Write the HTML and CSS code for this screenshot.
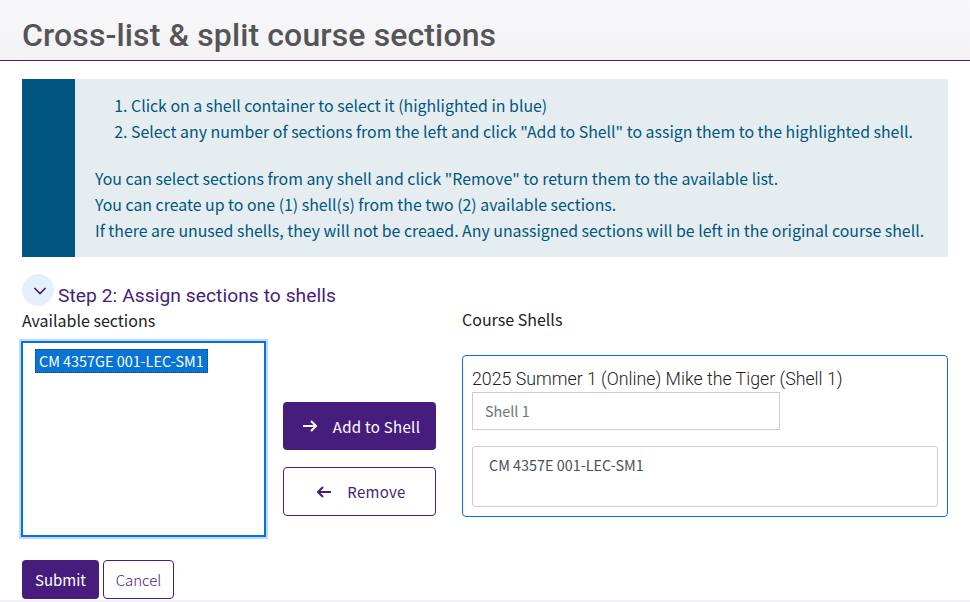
FILE: index.html
```html
<!DOCTYPE html>
<html lang="en">
<head>
<meta charset="utf-8">
<title>Cross-list &amp; split course sections</title>
<link rel="stylesheet" href="styles.css">
</head>
<body>
<header class="page-header"><h1>Cross-list &amp; split course sections</h1></header>
<main class="content">
  <section class="notice">
    <div class="notice-bar"></div>
    <div class="notice-body">
      <ol>
        <li>Click on a shell container to select it (highlighted in blue)</li>
        <li>Select any number of sections from the left and click "Add to Shell" to assign them to the highlighted shell.</li>
      </ol>
      <p>You can select sections from any shell and click "Remove" to return them to the available list.</p>
      <p>You can create up to one (1) shell(s) from the two (2) available sections.</p>
      <p>If there are unused shells, they will not be creaed. Any unassigned sections will be left in the original course shell.</p>
    </div>
  </section>
  <div class="step">
    <span class="chevron"><svg class="chevron-icon" width="14" height="14" viewBox="0 0 14 14"><path d="M1.500 4 7 9.500 12.500 4" fill="none" stroke="#461d7c" stroke-width="1.700"/></svg></span>
    <h2>Step 2: Assign sections to shells</h2>
  </div>
  <div class="assign">
    <div class="available">
      <div class="label">Available sections</div>
      <div class="listbox"><span class="option">CM 4357GE 001-LEC-SM1</span></div>
    </div>
    <div class="actions">
      <button class="btn primary"><svg class="arrow" width="14" height="12" viewBox="0 0 14 12"><path d="M0 6h13M8 1l5 5-5 5" fill="none" stroke="currentColor" stroke-width="2"/></svg>Add to Shell</button>
      <button class="btn outline"><svg class="arrow" width="14" height="12" viewBox="0 0 14 12"><path d="M14 6H1M6 1 1 6l5 5" fill="none" stroke="currentColor" stroke-width="2"/></svg>Remove</button>
    </div>
    <div class="shells">
      <div class="label shells-label">Course Shells</div>
      <div class="shell">
        <div class="shell-title">2025 Summer 1 (Online) Mike the Tiger (Shell 1)</div>
        <div class="shell-input">Shell 1</div>
        <div class="shell-list">CM 4357E 001-LEC-SM1</div>
      </div>
    </div>
  </div>
  <div class="form-actions">
    <button class="submit">Submit</button>
    <button class="cancel">Cancel</button>
  </div>
</main>
<div class="page-foot"></div>
</body>
</html>
```
FILE: styles.css
```css
* { box-sizing: border-box; }
html, body { margin: 0; height: 602px; overflow: hidden; background: #fff; }
body { font-family: "Noto Sans CJK SC", "Liberation Sans", sans-serif; font-size: 16px; color: #222; position: relative; }
.page-header { height: 61px; padding: 16px 22px 0; background: linear-gradient(#f8f8fa, #f3f2f6); border-bottom: 1px solid #461d7c; }
h1 { margin: 0; font: 500 32px/38px Roboto, sans-serif; letter-spacing: .12px; color: #555; }
.content { padding: 18px 22px 0; }
.notice { display: flex; height: 178px; background: #e5edf0; color: #00567f; }
.notice-bar { flex: none; width: 53px; background: #00567f; }
.notice-body { padding: 14px 0 0 20px; font-size: 15.880px; line-height: 26px; }
.notice-body ol { margin: 0 0 21px; padding-left: 36px; }
.notice-body p { margin: 0; }
.step { display: flex; align-items: flex-end; height: 32px; margin-top: 17px; }
.chevron { display: flex; align-items: center; justify-content: center; width: 32px; height: 32px; border-radius: 50%; background: #e6f0fd; margin-right: 4px; }
.chevron-icon { margin: 2px 0 0 4px; }
h2 { margin: 0 0 -2px; font: 400 19.200px/24px Roboto, sans-serif; color: #461d7c; letter-spacing: .07px; }
.assign { display: flex; padding-top: 2px; }
.available { width: 245px; }
.label { font-size: 16px; line-height: 24px; color: #212121; }
.listbox { height: 196px; margin: 9px 1px 0 -1px; border: 2px solid #0a6fd8; outline: 2px solid #bcdcfb; padding: 5px 12px; }
.option { display: inline-block; height: 24px; padding: 0 4px; background: #0a74d4; color: #fff; font-size: 14.400px; line-height: 23px; outline: 1px dotted #04478a; outline-offset: -1px; }
.actions { width: 153px; margin-left: 16px; padding-top: 94px; display: flex; flex-direction: column; gap: 17px; }
.btn { display: flex; align-items: center; justify-content: center; width: 153px; height: 48px; padding: 0 0 0 4px; border-radius: 4px; font: 400 15px "Noto Sans CJK SC", sans-serif; letter-spacing: .3px; }
.arrow { margin-right: 16px; }
.primary { background: #461d7c; color: #fff; border: 0; }
.outline { background: #fff; color: #461d7c; border: 1px solid #461d7c; height: 49px; }
.shells { width: 486px; margin-left: 26px; }
.shells-label { margin-top: -1px; }
.shell { height: 162px; margin-top: 24px; padding: 11px 9px 0; border: 1px solid #0a6fd8; border-radius: 4px; }
.shell-title { font: 300 17.760px/24px Roboto, sans-serif; color: #222; white-space: nowrap; }
.shell-input { width: 308px; height: 38px; margin-top: 1px; border: 1px solid #ccc; padding-left: 12px; line-height: 36px; color: #6c757d; font-size: 14.400px; }
.shell-list { height: 61px; margin-top: 16px; border: 1px solid #ccc; border-radius: 3px; padding: 6px 16px; font-size: 14.400px; line-height: 24px; color: #495057; }
.form-actions { display: flex; gap: 4px; margin-top: 23px; }
.submit, .cancel { height: 39px; border-radius: 4px; font: 400 15px "Noto Sans CJK SC", sans-serif; }
.submit { width: 77px; border: 0; background: #461d7c; color: #fff; }
.cancel { width: 71px; background: #fff; border: 1px solid #461d7c; color: #461d7c; font-weight: 300; }
.page-foot { position: absolute; left: 0; right: 0; bottom: 0; height: 2px; background: #f1f1f5; }
```
